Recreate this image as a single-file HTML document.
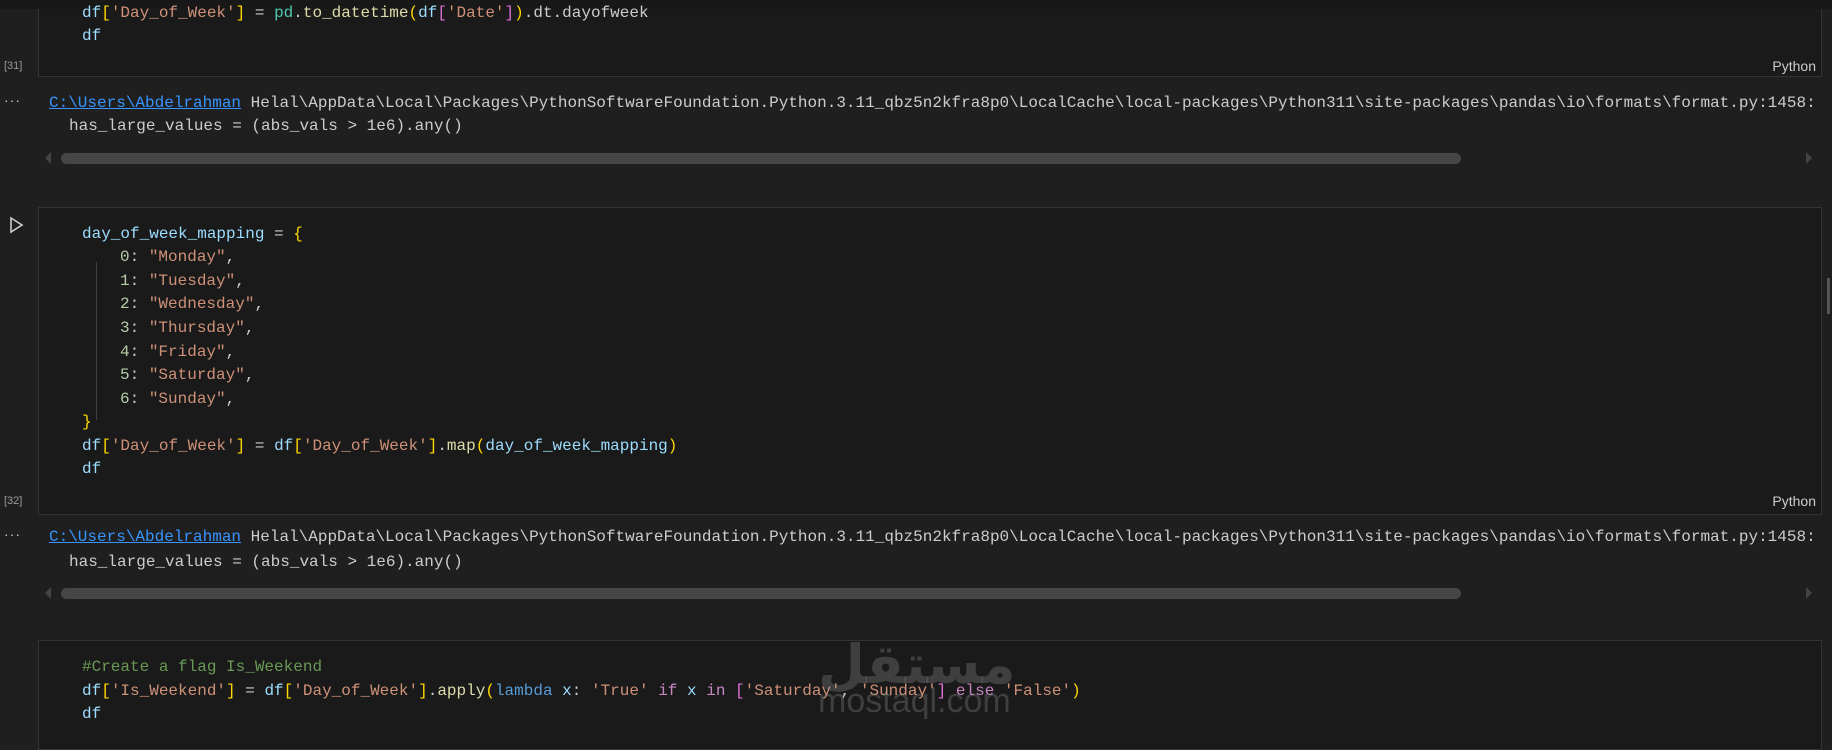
<!DOCTYPE html>
<html><head><meta charset="utf-8"><style>
body{margin:0;width:1832px;height:740px;background:#1f1f1f;overflow:hidden;position:relative;font-family:"Liberation Mono",monospace;font-size:16px;color:#cccccc}
.cell{position:absolute;left:38px;width:1784px;background:#1a1a1a;border:1px solid #333;box-sizing:border-box}
.l{position:absolute;white-space:pre;line-height:24px;height:24px}
.cnt{position:absolute;left:4px;font-family:"Liberation Sans",sans-serif;font-size:11px;color:#9a9a9a}
.py{position:absolute;right:16px;font-family:"Liberation Sans",sans-serif;font-size:14px;color:#cccccc}
.v{color:#9cdcfe}.s{color:#ce9178}.b{color:#ffd700}.n{color:#b5cea8}.f{color:#dcdcaa}.c{color:#6a9955}.k{color:#569cd6}.p{color:#c586c0}.t{color:#4ec9b0}.m{color:#da70d6}
a{color:#3794ff;text-decoration:underline}
.sb{position:absolute;left:61px;width:1400px;height:11px;border-radius:6px;background:#464646}
.arl{position:absolute;width:0;height:0;border-top:6px solid transparent;border-bottom:6px solid transparent;border-right:6px solid #444}
.arr{position:absolute;width:0;height:0;border-top:6px solid transparent;border-bottom:6px solid transparent;border-left:6px solid #444}
.dots{position:absolute;left:4px;color:#ccc;font-family:"Liberation Sans",sans-serif;font-size:14px;letter-spacing:1px}
</style></head><body>
<div style="position:absolute;left:0;top:0;width:1832px;height:9px;background:#181818"></div>
<div class="cell" style="top:9px;height:68px;border-top:none"></div>
<div class="l" style="left:82px;top:1px"><span class="v">df</span><span class="b">[</span><span class="s">'Day_of_Week'</span><span class="b">]</span> = <span class="t">pd</span>.<span class="f">to_datetime</span><span class="b">(</span><span class="v">df</span><span class="m">[</span><span class="s">'Date'</span><span class="m">]</span><span class="b">)</span>.dt.dayofweek</div>
<div class="l" style="left:82px;top:24px"><span class="v">df</span></div>
<div class="cnt" style="top:60px">[31]</div>
<div class="py" style="top:58px">Python</div>

<div class="dots" style="top:92px">···</div>
<div class="l" style="left:49px;top:91px"><a>C:\Users\Abdelrahman</a> Helal\AppData\Local\Packages\PythonSoftwareFoundation.Python.3.11_qbz5n2kfra8p0\LocalCache\local-packages\Python311\site-packages\pandas\io\formats\format.py:1458:</div>
<div class="l" style="left:69px;top:114px">has_large_values = (abs_vals &gt; 1e6).any()</div>
<div class="arl" style="left:45px;top:152px"></div>
<div class="sb" style="top:153px"></div>
<div class="arr" style="left:1806px;top:152px"></div>

<div class="cell" style="top:207px;height:308px"></div>
<svg style="position:absolute;left:9px;top:216px" width="16" height="18"><path d="M2 2 L13 9 L2 16 Z" fill="none" stroke="#ccc" stroke-width="1.6"/></svg>
<div style="position:absolute;left:96px;top:262px;width:1px;height:158px;background:#404040"></div>
<div class="l" style="left:82px;top:222px"><span class="v">day_of_week_mapping</span> = <span class="b">{</span></div>
<div class="l" style="left:120px;top:245px"><span class="n">0</span>: <span class="s">"Monday"</span>,</div>
<div class="l" style="left:120px;top:269px"><span class="n">1</span>: <span class="s">"Tuesday"</span>,</div>
<div class="l" style="left:120px;top:292px"><span class="n">2</span>: <span class="s">"Wednesday"</span>,</div>
<div class="l" style="left:120px;top:316px"><span class="n">3</span>: <span class="s">"Thursday"</span>,</div>
<div class="l" style="left:120px;top:340px"><span class="n">4</span>: <span class="s">"Friday"</span>,</div>
<div class="l" style="left:120px;top:363px"><span class="n">5</span>: <span class="s">"Saturday"</span>,</div>
<div class="l" style="left:120px;top:387px"><span class="n">6</span>: <span class="s">"Sunday"</span>,</div>
<div class="l" style="left:82px;top:410px"><span class="b">}</span></div>
<div class="l" style="left:82px;top:434px"><span class="v">df</span><span class="b">[</span><span class="s">'Day_of_Week'</span><span class="b">]</span> = <span class="v">df</span><span class="b">[</span><span class="s">'Day_of_Week'</span><span class="b">]</span>.<span class="f">map</span><span class="b">(</span><span class="v">day_of_week_mapping</span><span class="b">)</span></div>
<div class="l" style="left:82px;top:457px"><span class="v">df</span></div>
<div class="cnt" style="top:495px">[32]</div>
<div class="py" style="top:493px">Python</div>

<div class="dots" style="top:526px">···</div>
<div class="l" style="left:49px;top:525px"><a>C:\Users\Abdelrahman</a> Helal\AppData\Local\Packages\PythonSoftwareFoundation.Python.3.11_qbz5n2kfra8p0\LocalCache\local-packages\Python311\site-packages\pandas\io\formats\format.py:1458:</div>
<div class="l" style="left:69px;top:550px">has_large_values = (abs_vals &gt; 1e6).any()</div>
<div class="arl" style="left:45px;top:587px"></div>
<div class="sb" style="top:588px"></div>
<div class="arr" style="left:1806px;top:587px"></div>

<div class="cell" style="top:640px;height:110px"></div>
<div class="l" style="left:82px;top:655px"><span class="c">#Create a flag Is_Weekend</span></div>
<div class="l" style="left:82px;top:679px"><span class="v">df</span><span class="b">[</span><span class="s">'Is_Weekend'</span><span class="b">]</span> = <span class="v">df</span><span class="b">[</span><span class="s">'Day_of_Week'</span><span class="b">]</span>.<span class="f">apply</span><span class="b">(</span><span class="k">lambda</span> <span class="v">x</span>: <span class="s">'True'</span> <span class="p">if</span> <span class="v">x</span> <span class="p">in</span> <span class="m">[</span><span class="s">'Saturday'</span>, <span class="s">'Sunday'</span><span class="m">]</span> <span class="p">else</span> <span class="s">'False'</span><span class="b">)</span></div>
<div class="l" style="left:82px;top:702px"><span class="v">df</span></div>

<div style="position:absolute;left:818px;top:628px;font-family:'Noto Sans CJK SC','DejaVu Sans',sans-serif;font-size:54px;font-weight:bold;color:rgba(150,150,150,0.3);line-height:64px">مستقل</div>
<div style="position:absolute;left:818px;top:682px;font-family:'Liberation Sans',sans-serif;font-size:34px;color:rgba(150,150,150,0.3)">mostaql.com</div>
<div style="position:absolute;right:2px;top:278px;width:3px;height:36px;background:#555"></div>
</body></html>
